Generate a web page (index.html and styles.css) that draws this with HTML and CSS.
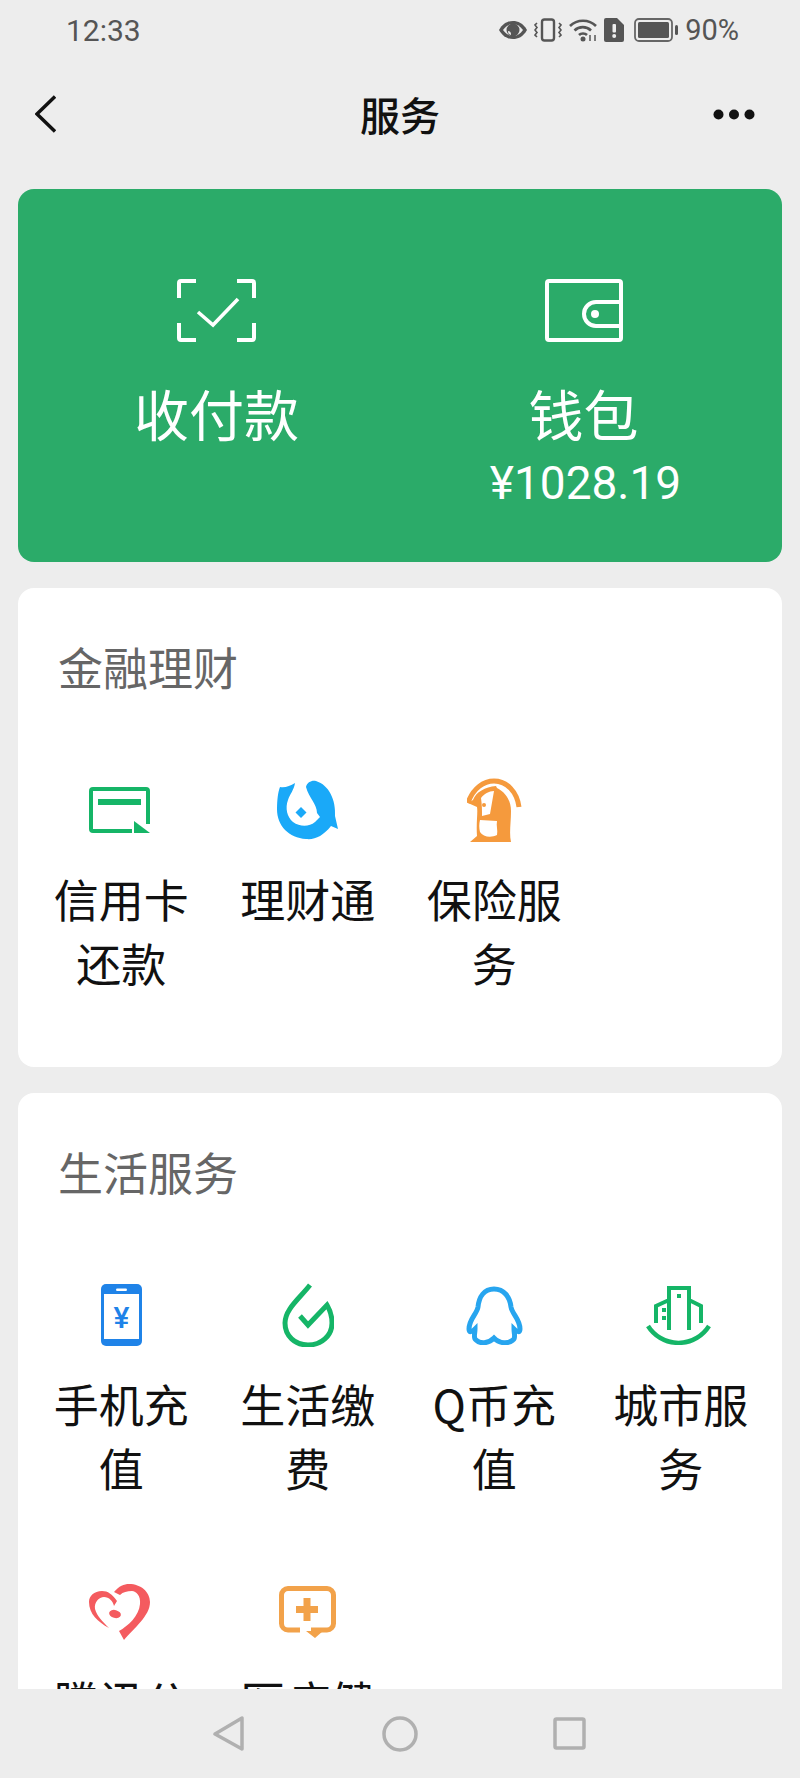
FILE: index.html
```html
<!DOCTYPE html>
<html lang="zh-CN">
<head>
  <meta charset="UTF-8">
  <title>服务</title>
  <link rel="stylesheet" href="styles.css">
</head>
<body>
  <div class="status-bar">
    <span class="clock">12:33</span>
    <div class="status-icons">
      <svg width="28" height="20" viewBox="0 0 28 20"><path d="M0 10C4 3 9 1 14 1s10 2 14 9c-4 7-9 9-14 9S4 17 0 10Z" fill="#555"/><path d="M4 10c3-4 6-6 10-6s7 2 10 6c-3 4-6 6-10 6S7 14 4 10Z" fill="#ededed"/><circle cx="14" cy="10" r="6.5" fill="#555"/><path d="M9 11c2 0 3 1 3 4-2-.5-3-2-3-4Z" fill="#ededed"/></svg>
      <svg width="28" height="24" viewBox="0 0 28 24" fill="none" stroke="#555"><rect x="8" y="1.5" width="12" height="21" rx="2.5" stroke-width="2.4"/><path d="M3 5l-2 2 2 2.500-2 2.500 2 2.500-2 2.500 2 2M25 5l2 2-2 2.500 2 2.500-2 2.500 2 2.500-2 2" stroke-width="1.600"/></svg>
      <svg width="28" height="24" viewBox="0 0 28 24" fill="none" stroke="#555" stroke-width="2.600"><path d="M1 8c7-7 19-7 26 0M5.500 12.500c4.500-4.500 12-4.500 16.500 0M10 17c2-2 6-2 8 0"/><circle cx="14" cy="21" r="2.500" fill="#555" stroke="none"/><path d="M21 17v6M26 17v6" stroke-width="1.500"/></svg>
      <svg width="20" height="24" viewBox="0 0 20 24"><path d="M2 0h11l7 7v15a2 2 0 0 1-2 2H2a2 2 0 0 1-2-2V2a2 2 0 0 1 2-2Z" fill="#555"/><rect x="8.500" y="6" width="3.500" height="8.500" rx="1" fill="#ededed"/><circle cx="10.200" cy="18" r="2" fill="#ededed"/></svg>
      <svg class="battery" width="44" height="24" viewBox="0 0 44 24"><rect x="1" y="1" width="37" height="22" rx="4" fill="none" stroke="#666" stroke-width="1.800"/><rect x="4" y="4" width="31" height="16" rx="1.500" fill="#555"/><rect x="41" y="7" width="3" height="10" rx="1.500" fill="#555"/></svg>
      <span class="percent">90%</span>
    </div>
  </div>

  <header class="top-bar">
    <svg class="back" width="21" height="38" viewBox="0 0 21 38" fill="none" stroke="#111" stroke-width="3.400"><path d="M20 1.500L2 19l18 17.500"/></svg>
    <h1 class="page-title">服务</h1>
    <svg class="more" width="42" height="11" viewBox="0 0 42 11" fill="#111"><circle cx="5.500" cy="5.500" r="5"/><circle cx="21" cy="5.500" r="5"/><circle cx="36.500" cy="5.500" r="5"/></svg>
  </header>

  <main class="content">
    <section class="pay-card">
      <div class="pay-item">
        <svg width="79" height="63" viewBox="0 0 79 63" fill="none" stroke="#fff" stroke-width="4"><path d="M2 19V4a2 2 0 0 1 2-2h15M60 2h15a2 2 0 0 1 2 2v15M2 44v15a2 2 0 0 0 2 2h15M60 61h15a2 2 0 0 0 2-2V44"/><path d="M21 33l15 13 25-26" stroke-width="3.600"/></svg>
        <div class="pay-label">收付款</div>
      </div>
      <div class="pay-item">
        <svg width="78" height="63" viewBox="0 0 78 63" fill="none" stroke="#fff" stroke-width="4"><rect x="2" y="2" width="74" height="59" rx="2"/><path d="M76 23H51a12 12 0 0 0 0 24h25"/><circle cx="50" cy="35" r="4" fill="#fff" stroke="none"/></svg>
        <div class="pay-label">钱包</div>
        <div class="pay-amount">¥1028.19</div>
      </div>
    </section>

    <section class="card">
      <h2 class="card-title">金融理财</h2>
      <div class="grid">
        <div class="item">
          <div class="item-icon">
            <svg class="nudge" width="61" height="46" viewBox="0 0 61 46" fill="none" stroke="#15b567" stroke-width="4"><path d="M43 44H4a2 2 0 0 1-2-2V4a2 2 0 0 1 2-2h53a2 2 0 0 1 2 2v33"/><path d="M9 15h43" stroke-width="6"/><path d="M45 34l16 12H45Z" fill="#15b567" stroke="none"/></svg>
          </div>
          <div class="item-label">信用卡还款</div>
        </div>
        <div class="item">
          <div class="item-icon">
            <svg width="61" height="60" viewBox="0 0 61 60" fill="#1aa9f8"><path d="M29 7C30 2 35 0 39 1C52 5 59 20 58 36L61 49L54 46C46 56 38 60 29 59C12 58 0 46 0 29C0 20 1 12 3 7C8 8 13 6 18 3C17 10 13 14 11 20C8 28 10 37 16 42C23 47 32 47 38 42L43 37L40 33C40 24 32 18 29 7Z"/><path d="M24 27l5.500 5.500-5.500 5.500-5.500-5.500Z"/></svg>
          </div>
          <div class="item-label">理财通</div>
        </div>
        <div class="item">
          <div class="item-icon">
            <svg width="55" height="65" viewBox="0 0 55 65"><path d="M1 25C6 10 17 3 27 3C40 3 50 14 52 29" fill="none" stroke="#f59a3d" stroke-width="5"/><path d="M29 8C18 9 9 14 6 22L1 25L10 29C11 35 9 45 10 58L3 64H44C42 55 44 45 44 33C44 22 38 14 30 10Z" fill="#f59a3d"/><path d="M14 20C17 16 22 13 27 13L23 36L15 38C15 33 15 27 14 20Z" fill="#fff"/><path d="M13 42L30 43C29 48 31 52 30 57C24 60 16 59 13 54C12 50 12 46 13 42Z" fill="#fff"/><circle cx="17" cy="27" r="2" fill="#f59a3d"/></svg>
          </div>
          <div class="item-label">保险服务</div>
        </div>
      </div>
    </section>

    <section class="card">
      <h2 class="card-title">生活服务</h2>
      <div class="grid">
        <div class="item">
          <div class="item-icon">
            <svg width="41" height="62" viewBox="0 0 41 62"><rect width="41" height="62" rx="5" fill="#1f83e8"/><rect x="3" y="10" width="35" height="45" fill="#fff"/><rect x="15" y="4.500" width="11" height="2.500" rx="1.200" fill="#fff"/><text x="20.500" y="44" class="phone-yen">¥</text></svg>
          </div>
          <div class="item-label">手机充值</div>
        </div>
        <div class="item">
          <div class="item-icon">
            <svg width="52" height="64" viewBox="0 0 52 64" fill="none" stroke="#15b567" stroke-width="5"><path d="M28 2C18 15 3 26 3 40C3 53 13 62 26 62C39 62 50 53 50 40C50 33 48 27 45 22L26 42L18 33"/></svg>
          </div>
          <div class="item-label">生活缴费</div>
        </div>
        <div class="item">
          <div class="item-icon">
            <svg width="57" height="59" viewBox="0 0 57 59" fill="none" stroke="#27a5ef" stroke-width="5"><path d="M28 3C18 3 13 11 12 21C11 28 3 33 3 43C3 47 6 46 9 43C9 48 7 52 10 54C14 58 22 58 28 52C34 58 42 58 47 54C50 52 48 48 48 43C51 46 54 47 54 43C54 33 46 28 45 21C44 11 38 3 28 3Z"/></svg>
          </div>
          <div class="item-label">Q币充值</div>
        </div>
        <div class="item">
          <div class="item-icon">
            <svg class="nudge" width="65" height="60" viewBox="0 0 65 60" fill="none" stroke="#15b567" stroke-width="4"><path d="M23 45V3H43V45M23 15L10 21V38M43 15L55 21V38"/><path d="M2 41A36 36 0 0 0 63 41" stroke-width="4.500"/><path d="M31 9h4v4h-4ZM16 23h4v4h-4ZM16 31h4v4h-4Z" fill="#15b567" stroke="none"/></svg>
          </div>
          <div class="item-label">城市服务</div>
        </div>
        <div class="item">
          <div class="item-icon">
            <svg class="nudge" width="62" height="56" viewBox="0 0 62 56" fill="#f45b5f"><path d="M26 8C31 2 36 0 41 0C53 0 62 8 62 18C62 32 46 44 36 56L31 47C40 42 51 32 52 20C53 12 48 7 44 7C39 7 35 8 32 11Z"/><path d="M29 17C24 10 20 7 14 7C6 7 1 12 1 18C1 30 10 38 21 44C14 37 9 32 7 25C6 18 11 13 16 13C21 13 25 17 26 22Z"/><ellipse cx="27" cy="30" rx="6" ry="4" transform="rotate(15 27 30)"/></svg>
          </div>
          <div class="item-label">腾讯公益</div>
        </div>
        <div class="item">
          <div class="item-icon">
            <svg width="57" height="52" viewBox="0 0 57 52"><path d="M21 44H9a6.500 6.500 0 0 1-6.500-6.500V9A6.500 6.500 0 0 1 9 2.500h39A6.500 6.500 0 0 1 54.500 9v28.500A6.500 6.500 0 0 1 48 44H32" fill="none" stroke="#f2a24a" stroke-width="5"/><path d="M27 45h17L36 52ZM24.500 12h7v8H39v7h-7.500v8h-7v-8H17v-7h7.500Z" fill="#f2a24a"/></svg>
          </div>
          <div class="item-label">医疗健康</div>
        </div>
      </div>
    </section>
  </main>

  <nav class="nav-bar">
    <svg width="31" height="35" viewBox="0 0 31 35" fill="none" stroke="#b0b0b0" stroke-width="3.500" stroke-linejoin="round"><path d="M29 2v31L2 18Z"/></svg>
    <svg width="36" height="36" viewBox="0 0 36 36" fill="none" stroke="#b0b0b0" stroke-width="3.500"><circle cx="18" cy="18" r="16"/></svg>
    <svg class="nav-square" width="33" height="33" viewBox="0 0 33 33" fill="none" stroke="#b0b0b0" stroke-width="3.500"><rect x="2" y="2" width="29" height="29" rx="1.500"/></svg>
  </nav>
</body>
</html>
```

FILE: styles.css
```css
* {
  box-sizing: border-box;
}

body {
  margin: 0;
  width: 800px;
  height: 1778px;
  display: flex;
  flex-direction: column;
  overflow: hidden;
  background: #ededed;
  color: #111;
  font-family: "Noto Sans CJK SC", Roboto, sans-serif;
}

.status-bar {
  flex: none;
  height: 60px;
  display: flex;
  align-items: center;
  justify-content: space-between;
  padding: 0 61px 0 66px;
  color: #555;
  font-family: Roboto, sans-serif;
}

.clock {
  font-size: 30px;
}

.status-icons {
  display: flex;
  align-items: center;
  gap: 7px;
}

.battery {
  margin-left: 3px;
}

.percent {
  font-size: 29px;
}

.top-bar {
  flex: none;
  height: 108px;
  display: grid;
  grid-template-columns: 1fr auto 1fr;
  align-items: center;
  padding: 0 45px;
}

.back {
  margin-left: -10px;
}

.more {
  justify-self: end;
}

.page-title {
  margin: 0;
  font-size: 40px;
  font-weight: 500;
  line-height: 1;
}

.content {
  flex: 1;
  min-height: 0;
  overflow: hidden;
  padding: 21px 18px 0;
  display: flex;
  flex-direction: column;
  gap: 26px;
}

.pay-card {
  flex: none;
  height: 373px;
  padding: 90px 15px 0;
  display: grid;
  grid-template-columns: 1fr 1fr;
  background: #2bab69;
  border-radius: 16px;
  color: #fff;
  text-align: center;
}

.pay-item svg {
  display: block;
  margin: 0 auto;
}

.pay-label {
  margin-top: 38px;
  font-size: 55px;
  line-height: 64px;
}

.pay-amount {
  margin-top: 7px;
  padding-left: 4px;
  font-family: Roboto, sans-serif;
  font-size: 46px;
  line-height: 64px;
}

.card {
  flex: none;
  padding: 47px 8px 20px 10px;
  background: #fff;
  border-radius: 16px;
}

.card-title {
  margin: 0 0 51px 30px;
  color: #666;
  font-size: 45px;
  font-weight: 400;
  line-height: 64px;
}

.grid {
  display: grid;
  grid-template-columns: repeat(4, 1fr);
}

.item {
  padding: 28px 20px 52px;
  text-align: center;
}

.item-icon {
  height: 64px;
  margin-bottom: 25px;
  display: flex;
  align-items: center;
  justify-content: center;
}

.nudge {
  margin-right: 4px;
}

.item-label {
  font-size: 45px;
  line-height: 64px;
}

.phone-yen {
  fill: #1f83e8;
  font-family: Roboto, sans-serif;
  font-size: 30px;
  font-weight: 500;
  text-anchor: middle;
}

.nav-bar {
  flex: none;
  height: 89px;
  display: flex;
  align-items: center;
  justify-content: center;
  gap: 138px;
  padding-right: 2px;
  background: #ededed;
}

.nav-square {
  margin-left: -3px;
}
```
